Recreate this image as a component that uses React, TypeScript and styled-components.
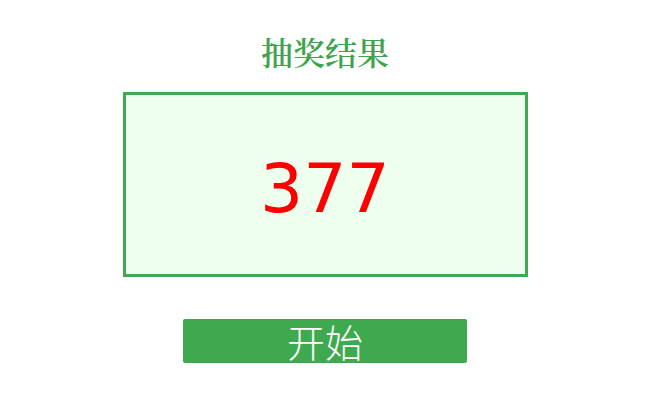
import React from "react";
import styled, { createGlobalStyle } from "styled-components";

const Global = createGlobalStyle`
  html, body { margin: 0; padding: 0; background: #ffffff; }
`;

const Page = styled.div`
  display: flex;
  flex-direction: column;
  align-items: center;
  padding-top: 31px;
  width: 650px;
`;

const Title = styled.h2`
  margin: 0;
  font-family: "Noto Serif CJK SC", "AR PL UMing CN", "Liberation Serif", serif;
  font-weight: 600;
  font-size: 32px;
  line-height: 40px;
  color: #3fa34d;
`;

const ResultBox = styled.div`
  box-sizing: border-box;
  margin-top: 21px;
  width: 405px;
  height: 185px;
  border: 3px solid #41a84f;
  background: #efffed;
  display: flex;
  align-items: center;
  justify-content: center;
  padding-top: 8px;
`;

const Number = styled.span`
  font-family: "DejaVu Sans", sans-serif;
  font-size: 68px;
  line-height: 1;
  color: #ff0000;
`;

const StartButton = styled.button`
  margin-top: 42px;
  width: 284px;
  height: 44px;
  border: none;
  border-radius: 2px;
  background: #3fa950;
  color: #ffffff;
  font-family: "Noto Sans CJK SC", sans-serif;
  font-weight: 300;
  font-size: 38px;
  line-height: 44px;
  padding: 0;
  cursor: pointer;
`;

export default function App() {
  return (
    <>
      <Global />
      <Page>
        <Title>抽奖结果</Title>
        <ResultBox>
          <Number>377</Number>
        </ResultBox>
        <StartButton>开始</StartButton>
      </Page>
    </>
  );
}
